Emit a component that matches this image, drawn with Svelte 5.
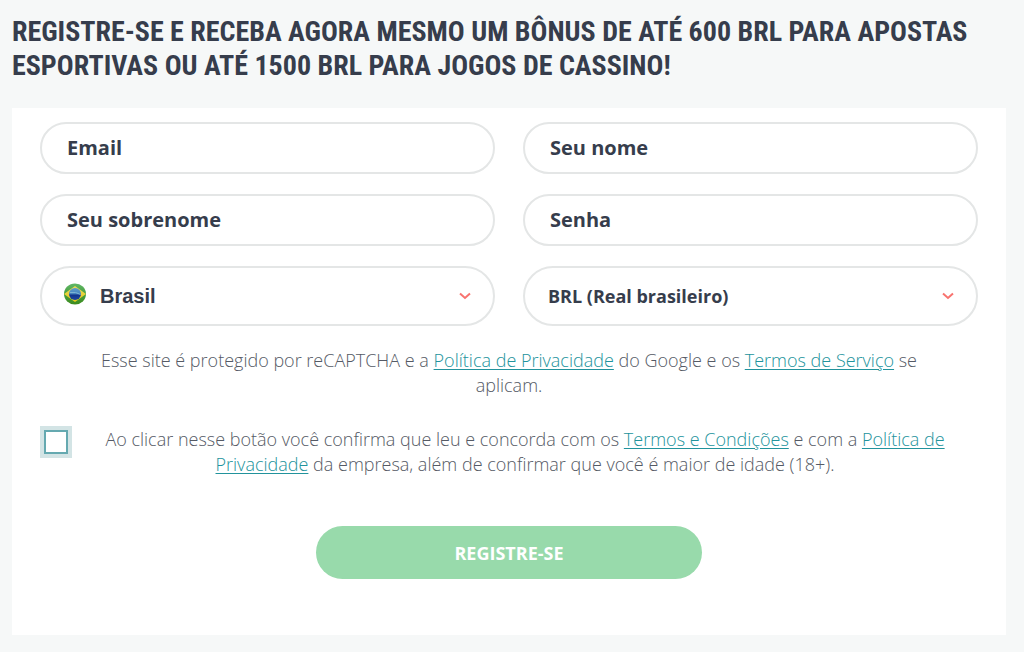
<script lang="ts">
    let email = $state("");
    let firstName = $state("");
    let lastName = $state("");
    let password = $state("");
    let country = $state("br");
    let currency = $state("brl");
    let accepted = $state(false);
</script>

<main>
    <h1>Registre-se e receba agora mesmo um bônus de até 600 BRL para apostas esportivas ou até 1500 BRL para jogos de cassino!</h1>

    <form onsubmit={e => e.preventDefault()}>
        <div class="fields">
            <input type="email" placeholder="Email" aria-label="Email" bind:value={email}>
            <input type="text" placeholder="Seu nome" aria-label="Seu nome" bind:value={firstName}>
            <input type="text" placeholder="Seu sobrenome" aria-label="Seu sobrenome" bind:value={lastName}>
            <input type="password" placeholder="Senha" aria-label="Senha" bind:value={password}>
            <div class="select country">
                <svg class="flag" viewBox="0 0 22 22" aria-hidden="true">
                    <defs>
                        <clipPath id="round"><ellipse cx="11" cy="11" rx="11" ry="10.500" /></clipPath>
                        <linearGradient id="green" x2="0" y2="1">
                            <stop offset="0" stop-color="#62b868" />
                            <stop offset="0.5" stop-color="#47a040" />
                            <stop offset="1" stop-color="#3c8a1c" />
                        </linearGradient>
                        <linearGradient id="yellow" x2="0" y2="1">
                            <stop offset="0" stop-color="#ead95c" />
                            <stop offset="1" stop-color="#e6c816" />
                        </linearGradient>
                        <linearGradient id="blue" x2="0" y2="1">
                            <stop offset="0" stop-color="#5c9ccb" />
                            <stop offset="0.45" stop-color="#4788c0" />
                            <stop offset="0.6" stop-color="#12348c" />
                            <stop offset="1" stop-color="#1d4aa0" />
                        </linearGradient>
                    </defs>
                    <g clip-path="url(#round)">
                        <rect width="22" height="22" fill="url(#green)" />
                        <path d="M11 3 22 11 11 19 0 11z" fill="url(#yellow)" />
                        <circle cx="11" cy="11" r="6" fill="url(#blue)" />
                        <path d="M6 9.500Q12 8.500 16.500 11.500" fill="none" stroke="#7db4d4" stroke-width="1" />
                    </g>
                </svg>
                <select aria-label="País" bind:value={country}>
                    <option value="br">Brasil</option>
                </select>
                <svg class="arrow" viewBox="0 0 12 8" aria-hidden="true"><path d="M1 1.500 6 6 11 1.500" /></svg>
            </div>
            <div class="select">
                <select aria-label="Moeda" bind:value={currency}>
                    <option value="brl">BRL (Real brasileiro)</option>
                </select>
                <svg class="arrow" viewBox="0 0 12 8" aria-hidden="true"><path d="M1 1.500 6 6 11 1.500" /></svg>
            </div>
        </div>

        <p>
            Esse site é protegido por reCAPTCHA e a <a href="#privacidade">Política de Privacidade</a> do Google e os <a href="#servico">Termos de Serviço</a> se aplicam.
        </p>

        <div class="terms">
            <input type="checkbox" id="accept" bind:checked={accepted}>
            <label for="accept">
                Ao clicar nesse botão você confirma que leu e concorda com os <a href="#termos">Termos e Condições</a> e com a <a href="#politica">Política de Privacidade</a> da empresa, além de confirmar que você é maior de idade (18+).
            </label>
        </div>

        <button type="submit">Registre-se</button>
    </form>
</main>

<style>
    :global(body) {
        background: #f6f8f8;
    }
    main {
        padding: 15px 18px 17px 12px;
        font-family: "Open Sans", sans-serif;
        color: #363d4c;
    }
    h1 {
        margin: 0 0 25px;
        font-family: "Roboto Condensed", Roboto, sans-serif;
        font-stretch: condensed;
        font-size: 28px;
        line-height: 34px;
        font-weight: 700;
        text-transform: uppercase;
    }
    form {
        padding: 14px 28px 56px;
        background: #fff;
    }
    .fields {
        display: grid;
        grid-template-columns: 1fr 1fr;
        gap: 20px 28px;
    }
    .fields input,
    .select {
        box-sizing: border-box;
        width: 100%;
        height: 52px;
        border: 2px solid #e4e6e6;
        border-radius: 30px;
        background: #fff;
        outline: none;
    }
    .fields input,
    select {
        color: inherit;
        font-family: inherit;
        font-size: 20px;
        font-weight: 700;
    }
    .fields input {
        padding: 0 25px 2px;
    }
    .fields input::placeholder {
        color: inherit;
        opacity: 1;
    }
    .select {
        position: relative;
        display: flex;
        align-items: center;
        height: 60px;
    }
    select {
        flex: 1;
        height: 100%;
        padding: 0 44px 0 23px;
        border: none;
        background: none;
        appearance: none;
        outline: none;
        font-size: 18px;
    }
    .country select {
        padding-left: 14px;
        font-family: "Liberation Sans", sans-serif;
        font-size: 20px;
    }
    .flag {
        width: 22px;
        height: 22px;
        margin: 0 0 4px 22px;
    }
    .arrow {
        position: absolute;
        right: 22px;
        width: 12px;
        height: 8px;
        pointer-events: none;
    }
    .arrow path {
        fill: none;
        stroke: #f8736f;
        stroke-width: 2;
    }
    p,
    label {
        font-size: 18px;
        line-height: 25px;
        font-weight: 300;
        text-align: center;
        color: #555a65;
    }
    p {
        margin: 22px 40px 29px;
    }
    a {
        color: #22939c;
        text-underline-offset: 2px;
    }
    .terms {
        display: flex;
        align-items: flex-start;
    }
    .terms input {
        box-sizing: border-box;
        appearance: none;
        flex: none;
        width: 24px;
        height: 24px;
        margin: 3px 4px;
        border: 2px solid #65a9b0;
        background: #fff;
        box-shadow: 0 0 0 4px #d3e4e5;
    }
    .terms input:checked {
        background: #65a9b0;
    }
    label {
        flex: 1;
        padding: 0 22px;
    }
    button {
        display: block;
        width: 386px;
        max-width: 100%;
        height: 53px;
        margin: 49px auto 0;
        border: none;
        border-radius: 27px;
        background: #98daab;
        color: #fff;
        font-family: inherit;
        font-size: 18px;
        font-weight: 700;
        text-transform: uppercase;
        cursor: pointer;
    }
</style>
